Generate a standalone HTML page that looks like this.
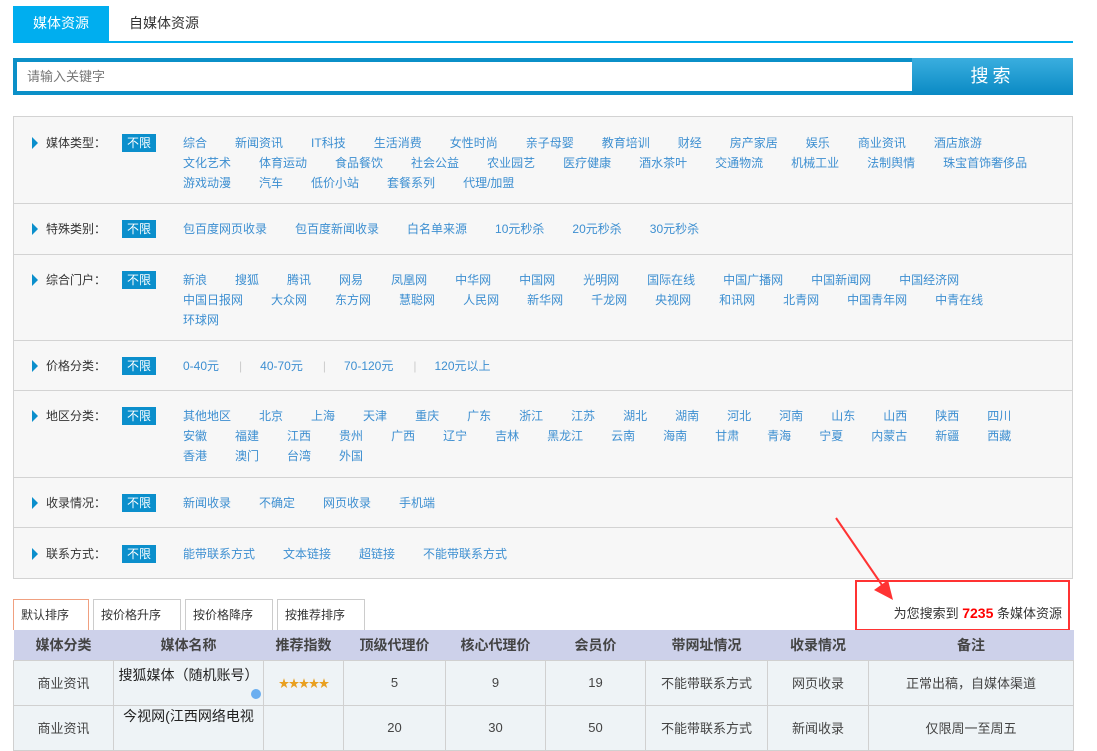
<!DOCTYPE html>
<html><head><meta charset="utf-8"><style>
*{margin:0;padding:0;box-sizing:border-box}
body{width:1097px;height:720px;overflow:hidden;background:#fff;font-family:"Liberation Sans","Noto Sans CJK SC",sans-serif;position:relative;color:#333}
.tabs{position:absolute;left:13px;top:6px;width:1060px;height:37px;border-bottom:2px solid #00aeef}
.tab{position:absolute;top:0;height:35px;line-height:35px;font-size:14px;text-align:center}
.search{position:absolute;left:13px;top:58px;width:1060px;height:37px;background:#0b90c8}
.search .in{position:absolute;left:4px;top:4px;width:895px;height:29px;background:#fff;font-size:13px;color:#777;line-height:29px;padding-left:10px}
.search .btn{position:absolute;left:899px;top:0;width:161px;height:37px;background:linear-gradient(#3aaedf,#0a8ac4);color:#fff;font-size:18px;text-align:center;line-height:37px;letter-spacing:4px}
.panel{position:absolute;left:13px;top:116px;width:1060px;height:463px;background:#f7f7f7;border:1px solid #d3d3d3}
.row{position:absolute;left:0;width:1058px;border-bottom:1px solid #d3d3d3}
.lab{position:absolute;left:32px;font-size:12px;color:#333;line-height:20px}
.lab:before{content:"";position:absolute;left:-14px;top:4px;border-left:6px solid #0b8fcc;border-top:6px solid transparent;border-bottom:6px solid transparent}
.bx{position:absolute;left:108px;width:34px;height:18px;background:#0b8fcc;color:#fff;font-size:12px;text-align:center;line-height:18px}
.its{position:absolute;left:169px;font-size:12px;line-height:20px;color:#3d8fd1;white-space:nowrap}
.its span{margin-right:28px}
.its.p span{margin-right:20px}
.sep{color:#ccc;margin-right:18px;font-weight:normal}
.sort{position:absolute;top:599px;height:31px;border:1px solid #ccc;border-bottom:none;font-size:12px;line-height:30px;padding-left:7px;background:#fff}
table{position:absolute;left:13px;top:630px;border-collapse:collapse;font-size:13px;table-layout:fixed;width:1060px}
th{background:#cdd1ea;height:30px;font-weight:bold;font-size:14px;color:#444;border:none}
td{background:#eef3f6;border:1px solid #d0d0d0;text-align:center;color:#444;height:45px}
.red{position:absolute;left:855px;top:580px;width:215px;height:51px;border:2px solid #f33}
</style></head><body>
<div class="tabs">
<div class="tab" style="left:0;width:96px;background:#00aeef;color:#fff">媒体资源</div>
<div class="tab" style="left:96px;width:110px;color:#333">自媒体资源</div>
</div>
<div class="search"><div class="in">请输入关键字</div><div class="btn">搜索</div></div>
<div class="panel">
<div class="row" style="top:0;height:87px"><div class="lab" style="top:16px">媒体类型：</div><div class="bx" style="top:17px">不限</div>
<div class="its" style="top:16px"><span>综合</span><span>新闻资讯</span><span>IT科技</span><span>生活消费</span><span>女性时尚</span><span>亲子母婴</span><span>教育培训</span><span>财经</span><span>房产家居</span><span>娱乐</span><span>商业资讯</span><span>酒店旅游</span><br><span>文化艺术</span><span>体育运动</span><span>食品餐饮</span><span>社会公益</span><span>农业园艺</span><span>医疗健康</span><span>酒水茶叶</span><span>交通物流</span><span>机械工业</span><span>法制舆情</span><span>珠宝首饰奢侈品</span><br><span>游戏动漫</span><span>汽车</span><span>低价小站</span><span>套餐系列</span><span>代理/加盟</span></div></div>
<div class="row" style="top:87px;height:51px"><div class="lab" style="top:15px">特殊类别：</div><div class="bx" style="top:16px">不限</div>
<div class="its" style="top:15px"><span>包百度网页收录</span><span>包百度新闻收录</span><span>白名单来源</span><span>10元秒杀</span><span>20元秒杀</span><span>30元秒杀</span></div></div>
<div class="row" style="top:138px;height:86px"><div class="lab" style="top:15px">综合门户：</div><div class="bx" style="top:16px">不限</div>
<div class="its" style="top:15px"><span>新浪</span><span>搜狐</span><span>腾讯</span><span>网易</span><span>凤凰网</span><span>中华网</span><span>中国网</span><span>光明网</span><span>国际在线</span><span>中国广播网</span><span>中国新闻网</span><span>中国经济网</span><br><span>中国日报网</span><span>大众网</span><span>东方网</span><span>慧聪网</span><span>人民网</span><span>新华网</span><span>千龙网</span><span>央视网</span><span>和讯网</span><span>北青网</span><span>中国青年网</span><span>中青在线</span><br><span>环球网</span></div></div>
<div class="row" style="top:224px;height:50px"><div class="lab" style="top:15px">价格分类：</div><div class="bx" style="top:16px">不限</div>
<div class="its p" style="top:15px"><span>0-40元</span><b class="sep">|</b><span>40-70元</span><b class="sep">|</b><span>70-120元</span><b class="sep">|</b><span>120元以上</span></div></div>
<div class="row" style="top:274px;height:87px"><div class="lab" style="top:15px">地区分类：</div><div class="bx" style="top:16px">不限</div>
<div class="its" style="top:15px"><span>其他地区</span><span>北京</span><span>上海</span><span>天津</span><span>重庆</span><span>广东</span><span>浙江</span><span>江苏</span><span>湖北</span><span>湖南</span><span>河北</span><span>河南</span><span>山东</span><span>山西</span><span>陕西</span><span>四川</span><br><span>安徽</span><span>福建</span><span>江西</span><span>贵州</span><span>广西</span><span>辽宁</span><span>吉林</span><span>黑龙江</span><span>云南</span><span>海南</span><span>甘肃</span><span>青海</span><span>宁夏</span><span>内蒙古</span><span>新疆</span><span>西藏</span><br><span>香港</span><span>澳门</span><span>台湾</span><span>外国</span></div></div>
<div class="row" style="top:361px;height:50px"><div class="lab" style="top:15px">收录情况：</div><div class="bx" style="top:16px">不限</div>
<div class="its" style="top:15px"><span>新闻收录</span><span>不确定</span><span>网页收录</span><span>手机端</span></div></div>
<div class="row" style="top:411px;height:51px;border-bottom:none"><div class="lab" style="top:16px">联系方式：</div><div class="bx" style="top:17px">不限</div>
<div class="its" style="top:16px"><span>能带联系方式</span><span>文本链接</span><span>超链接</span><span>不能带联系方式</span></div></div>
</div>
<svg style="position:absolute;left:0;top:0" width="1097" height="720"><line x1="836" y1="518" x2="884" y2="588" stroke="#f33" stroke-width="2"/><polygon points="893,600 874,590 888,580" fill="#f33"/></svg>
<div class="red"></div>
<div style="position:absolute;right:35px;top:603px;font-size:13px;color:#333">为您搜索到 <b style="color:#f00;font-size:14px">7235</b> 条媒体资源</div>
<div class="sort" style="left:13px;width:76px;border:1px solid #f0a080;border-bottom:none">默认排序</div>
<div class="sort" style="left:93px;width:88px">按价格升序</div>
<div class="sort" style="left:185px;width:88px">按价格降序</div>
<div class="sort" style="left:277px;width:88px">按推荐排序</div>
<table>
<colgroup><col style="width:100px"><col style="width:150px"><col style="width:80px"><col style="width:102px"><col style="width:100px"><col style="width:100px"><col style="width:122px"><col style="width:101px"><col style="width:205px"></colgroup>
<tr><th>媒体分类</th><th>媒体名称</th><th>推荐指数</th><th>顶级代理价</th><th>核心代理价</th><th>会员价</th><th>带网址情况</th><th>收录情况</th><th>备注</th></tr>
<tr><td>商业资讯</td><td style="position:relative;vertical-align:top;padding-top:4px;font-size:14px;color:#222">搜狐媒体（随机账号）<span style="position:absolute;right:2px;bottom:6px;width:10px;height:10px;border-radius:50%;background:#6aaef0"></span></td><td style="color:#e9a020;font-size:11px;letter-spacing:-1px">★★★★★</td><td>5</td><td>9</td><td>19</td><td>不能带联系方式</td><td>网页收录</td><td>正常出稿，自媒体渠道</td></tr>
<tr><td>商业资讯</td><td style="vertical-align:top;font-size:14px;color:#222">今视网(江西网络电视</td><td></td><td>20</td><td>30</td><td>50</td><td>不能带联系方式</td><td>新闻收录</td><td>仅限周一至周五</td></tr>
</table>
</body></html>
